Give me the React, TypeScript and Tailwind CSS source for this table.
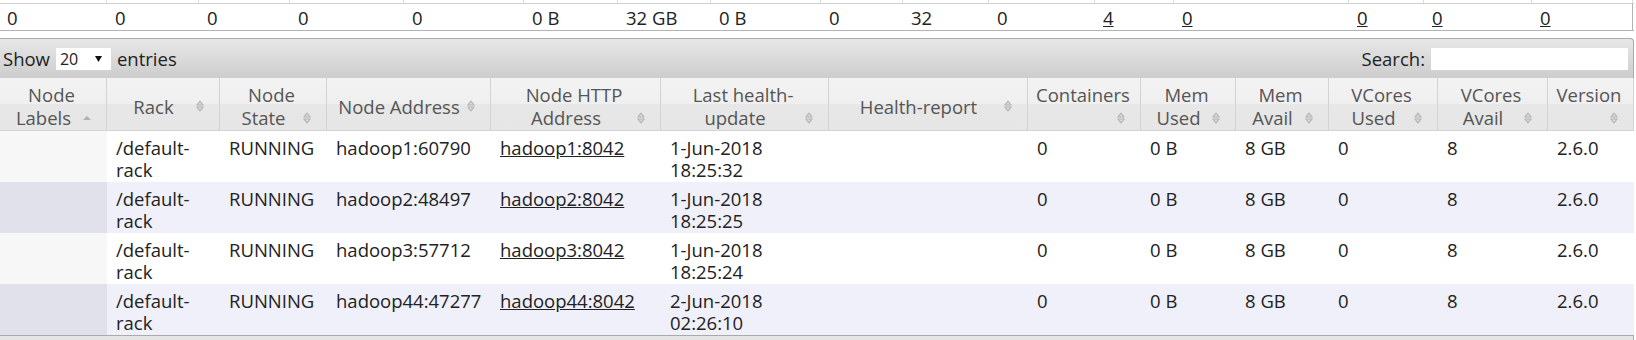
import React from "react";

const SUM_COLS =
  "grid-cols-[107px_92px_91px_114px_120px_94px_93px_110px_82px_86px_106px_79px_175px_75px_108px_101px]";
const COLS =
  "grid-cols-[107px_113px_107px_164px_170px_168px_199px_113px_95px_93px_109px_110px_86px]";

const summary: { v: string; link?: boolean }[] = [
  { v: "0" },
  { v: "0" },
  { v: "0" },
  { v: "0" },
  { v: "0" },
  { v: "0 B" },
  { v: "32 GB" },
  { v: "0 B" },
  { v: "0" },
  { v: "32" },
  { v: "0" },
  { v: "4", link: true },
  { v: "0", link: true },
  { v: "0", link: true },
  { v: "0", link: true },
  { v: "0", link: true },
];

const heads: { lines: string[]; asc?: boolean }[] = [
  { lines: ["Node", "Labels"], asc: true },
  { lines: ["Rack"] },
  { lines: ["Node", "State"] },
  { lines: ["Node Address"] },
  { lines: ["Node HTTP", "Address"] },
  { lines: ["Last health-", "update"] },
  { lines: ["Health-report"] },
  { lines: ["Containers", ""] },
  { lines: ["Mem", "Used"] },
  { lines: ["Mem", "Avail"] },
  { lines: ["VCores", "Used"] },
  { lines: ["VCores", "Avail"] },
  { lines: ["Version", ""] },
];

const nodes = [
  { addr: "hadoop1:60790", http: "hadoop1:8042", day: "1-Jun-2018", time: "18:25:32" },
  { addr: "hadoop2:48497", http: "hadoop2:8042", day: "1-Jun-2018", time: "18:25:25" },
  { addr: "hadoop3:57712", http: "hadoop3:8042", day: "1-Jun-2018", time: "18:25:24" },
  { addr: "hadoop44:47277", http: "hadoop44:8042", day: "2-Jun-2018", time: "02:26:10" },
];

function SortIcon({ asc }: { asc?: boolean }) {
  if (asc) {
    return (
      <svg width="16" height="16" viewBox="0 0 16 16" className="shrink-0">
        <path d="M4 10 L8 6 L12 10 Z" fill="#b0b0b0" />
      </svg>
    );
  }
  return (
    <svg width="16" height="16" viewBox="0 0 16 16" className="shrink-0">
      <path
        d="M4.8 7 L8 3.2 L11.2 7 Z"
        fill="#dadada"
        stroke="#b3b3b3"
        strokeWidth="1.1"
        strokeLinejoin="round"
      />
      <path
        d="M4.8 9 L8 12.8 L11.2 9 Z"
        fill="#dadada"
        stroke="#b3b3b3"
        strokeWidth="1.1"
        strokeLinejoin="round"
      />
    </svg>
  );
}

export default function App() {
  return (
    <div className="min-h-screen bg-white font-['Open_Sans',sans-serif] text-[18.5px] text-[#222]">
      <div className="w-[1634px]">
        {/* tail of the cluster metrics table */}
        <div className={`grid h-[4px] border-b border-[#cfcfcf] ${SUM_COLS}`}>
          {summary.map((_, i) => (
            <div key={i} className="border-r border-[#dcdcdc]" />
          ))}
        </div>
        <div className={`grid border-b border-[#b3b3b3] ${SUM_COLS}`}>
          {summary.map((c, i) => (
            <div
              key={i}
              className={`pt-[3px] pb-px leading-[22px] ${i === 0 ? "pl-[7px]" : "pl-2"} ${
                i === summary.length - 1 ? "border-r border-[#b3b3b3]" : ""
              }`}
            >
              {c.link ? <a className="underline">{c.v}</a> : c.v}
            </div>
          ))}
        </div>

        <div className="h-[7px]" />

        {/* datatable toolbar */}
        <div className="flex h-10 items-center justify-between rounded-tr border-t border-r border-[#aaa] bg-[linear-gradient(to_bottom,#e7e7e7,#cdcdcd)] pl-[3px] pr-[5px]">
          <div className="flex items-center">
            <span>Show</span>
            <div className="mx-[6px] flex h-[22px] w-[55px] items-center justify-between bg-white pl-[4px] pr-[9px] text-[16px]">
              <span>20</span>
              <svg width="7" height="6" viewBox="0 0 7 6">
                <path d="M0 0 H7 L3.5 6 Z" fill="#111" />
              </svg>
            </div>
            <span>entries</span>
          </div>
          <div className="flex items-center">
            <span>Search:</span>
            <input type="text" className="ml-[6px] h-[22px] w-[197px] bg-white outline-none" />
          </div>
        </div>

        {/* header */}
        <div
          className={`grid border-b border-[#d3d3d3] bg-[linear-gradient(to_bottom,#f3f3f3_0%,#efefef_50%,#e7e7e7_51%,#e6e6e6_100%)] text-[#555] ${COLS}`}
        >
          {heads.map((h, i) => (
            <div
              key={i}
              className="flex h-[52px] flex-col justify-center border-r border-[#d3d3d3] pt-[5px] pb-px pl-2 pr-[11px] leading-[23px]"
            >
              {h.lines.map((l, j) => (
                <div key={j} className="flex h-[23px] items-center">
                  <span className="flex-1 whitespace-nowrap text-center">{l}</span>
                  {j === h.lines.length - 1 && <SortIcon asc={h.asc} />}
                </div>
              ))}
            </div>
          ))}
        </div>

        {/* rows */}
        {nodes.map((n, i) => {
          const odd = i % 2 === 1;
          const cell = "pl-[9px] pr-[9px] pt-[6px] pb-px leading-[22px] whitespace-nowrap";
          return (
            <div key={n.addr} className={`grid h-[51px] ${COLS} ${odd ? "bg-[#f0f0fa]" : "bg-white"}`}>
              <div className={odd ? "bg-[#e1e1ec]" : "bg-[#f7f7f7]"} />
              <div className={cell}>
                /default-
                <br />
                rack
              </div>
              <div className={cell}>RUNNING</div>
              <div className={cell}>{n.addr}</div>
              <div className={cell}>
                <a className="underline">{n.http}</a>
              </div>
              <div className={cell}>
                {n.day}
                <br />
                {n.time}
              </div>
              <div className={cell} />
              <div className={cell}>0</div>
              <div className={cell}>0 B</div>
              <div className={cell}>8 GB</div>
              <div className={cell}>0</div>
              <div className={cell}>8</div>
              <div className={cell}>2.6.0</div>
            </div>
          );
        })}

        {/* footer toolbar */}
        <div className="h-[30px] border-t border-r border-[#aaa] bg-[linear-gradient(to_bottom,#e7e7e7,#cdcdcd)]" />
      </div>
    </div>
  );
}
